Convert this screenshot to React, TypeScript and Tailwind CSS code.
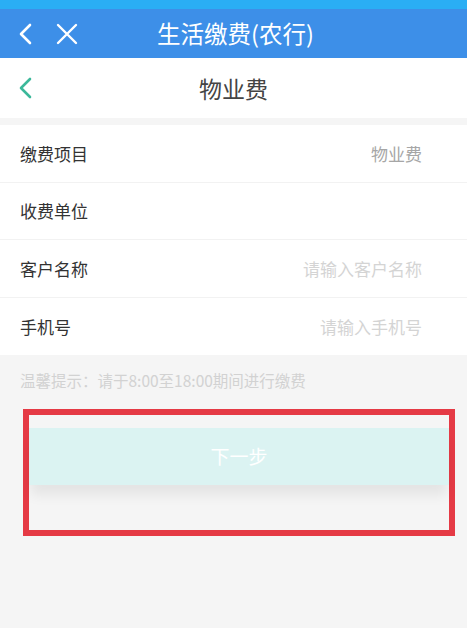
import React from "react";

const rows = [
  { label: "缴费项目", value: "物业费", tone: "text-[#a6a6a6]" },
  { label: "收费单位", value: "", tone: "" },
  { label: "客户名称", value: "请输入客户名称", tone: "text-[#d4d4d4]" },
  { label: "手机号", value: "请输入手机号", tone: "text-[#d4d4d4]" },
];

function Chevron({ className }: { className: string }) {
  return (
    <svg viewBox="0 0 14 22" className={className} fill="none" stroke="currentColor" strokeWidth="2.6" strokeLinecap="round" strokeLinejoin="round">
      <path d="M12 2 L3 11 L12 20" />
    </svg>
  );
}

export default function App() {
  return (
    <div className="w-[467px] h-[628px] overflow-hidden bg-[#f5f5f5] font-['Noto_Sans_CJK_SC','Noto_Sans',sans-serif]">
      <div className="h-[9px] bg-[#2aaef4]" />
      <header className="relative h-[49px] bg-[#3d8fe8] flex items-center justify-center">
        <div className="absolute left-[18px] top-0 h-full flex items-center gap-[24px] text-white">
          <Chevron className="w-[14px] h-[22px]" />
          <svg viewBox="0 0 22 22" className="w-[22px] h-[22px]" fill="none" stroke="currentColor" strokeWidth="2.4" strokeLinecap="round">
            <path d="M2 2 L20 20 M20 2 L2 20" />
          </svg>
        </div>
        <h1 className="text-white text-[23.5px] leading-none pl-[4px]">生活缴费(农行)</h1>
      </header>

      <nav className="relative h-[60px] bg-white flex items-center justify-center">
        <div className="absolute left-[18px] top-0 h-full flex items-center text-[#3cb89a]">
          <Chevron className="w-[14px] h-[22px]" />
        </div>
        <span className="text-[#444] text-[23px] leading-none">物业费</span>
      </nav>

      <div className="h-[7px]" />

      <section className="bg-white">
        {rows.map((r, i) => (
          <div
            key={r.label}
            className={[
              "h-[57.5px] flex items-center justify-between pl-[20px] pr-[45px]",
              i < rows.length - 1 ? "border-b border-[#f2f2f2]" : "",
            ].join(" ")}
          >
            <span className="text-[17px] text-[#333]">{r.label}</span>
            <span className={["text-[17px]", r.tone].join(" ")}>{r.value}</span>
          </div>
        ))}
      </section>

      <p className="pl-[20px] pt-[15px] text-[15.5px] leading-[20px] text-[#d2d2d2]">
        温馨提示：请于8:00至18:00期间进行缴费
      </p>

      <div className="ml-[23px] mr-[12px] mt-[19px] h-[127px] border-[6px] border-[#e53a45] pt-[13px]">
        <div className="h-[57px] bg-[#dbf3f2] flex items-center justify-center shadow-[0_12px_12px_-2px_rgba(0,0,0,0.07)]">
          <span className="text-white text-[19px]">下一步</span>
        </div>
      </div>
    </div>
  );
}
